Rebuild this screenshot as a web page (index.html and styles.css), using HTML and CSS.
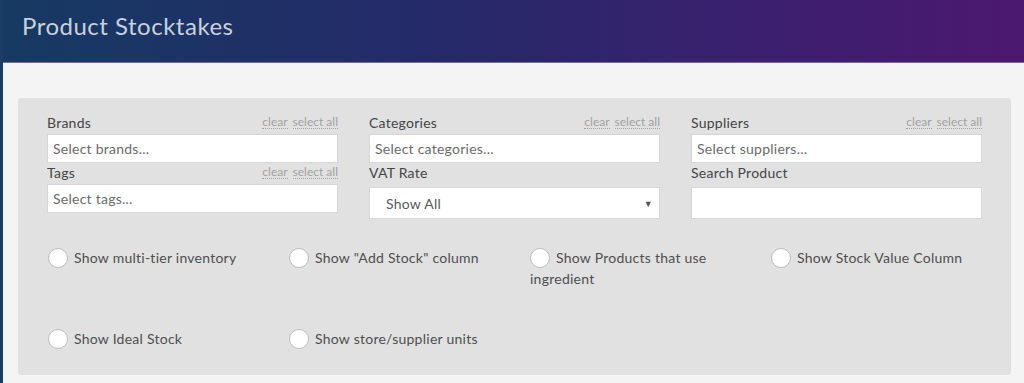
FILE: index.html
```html
<!DOCTYPE html>
<html lang="en">
<head>
    <meta charset="UTF-8">
    <meta name="viewport" content="width=device-width, initial-scale=1.0">
    <title>Product Stocktakes</title>
    <link rel="stylesheet" href="styles.css">
</head>
<body>
    <header class="page-header">
        <h1>Product Stocktakes</h1>
    </header>

    <main class="page-content">
        <div class="filter-panel">
            <div class="filter-grid">
                <div class="field">
                    <div class="field-head">
                        <label>Brands</label>
                        <span class="links"><a>clear</a><a>select all</a></span>
                    </div>
                    <div class="picker">Select brands...</div>
                </div>
                <div class="field">
                    <div class="field-head">
                        <label>Categories</label>
                        <span class="links"><a>clear</a><a>select all</a></span>
                    </div>
                    <div class="picker">Select categories...</div>
                </div>
                <div class="field">
                    <div class="field-head">
                        <label>Suppliers</label>
                        <span class="links"><a>clear</a><a>select all</a></span>
                    </div>
                    <div class="picker">Select suppliers...</div>
                </div>

                <div class="field">
                    <div class="field-head">
                        <label>Tags</label>
                        <span class="links"><a>clear</a><a>select all</a></span>
                    </div>
                    <div class="picker">Select tags...</div>
                </div>
                <div class="field">
                    <div class="field-head">
                        <label>VAT Rate</label>
                    </div>
                    <div class="select-box">
                        <span>Show All</span>
                        <span class="caret">&#9660;</span>
                    </div>
                </div>
                <div class="field">
                    <div class="field-head">
                        <label>Search Product</label>
                    </div>
                    <input type="text" class="text-input">
                </div>
            </div>

            <div class="option-grid">
                <div class="option"><span class="radio"></span>Show multi-tier inventory</div>
                <div class="option"><span class="radio"></span>Show "Add Stock" column</div>
                <div class="option"><span class="radio"></span>Show Products that use ingredient</div>
                <div class="option"><span class="radio"></span>Show Stock Value Column</div>
                <div class="option"><span class="radio"></span>Show Ideal Stock</div>
                <div class="option"><span class="radio"></span>Show store/supplier units</div>
            </div>
        </div>
    </main>
</body>
</html>
```

FILE: styles.css
```css
html, body {
    overflow: hidden;
}
body {
    margin: 0;
    font-family: 'Lato', 'Noto Sans', sans-serif;
    background: #f4f4f5;
    border-left: 3px solid #1b3d63;
    min-height: 100vh;
    box-sizing: border-box;
    letter-spacing: 0.25px;
}
.page-header {
    height: 63px;
    background: linear-gradient(90deg, #163a62 0%, #26296a 45%, #3c1f6e 75%, #4c196f 100%);
    border-bottom: 1px solid #7a6a96;
    box-sizing: border-box;
    margin-left: -3px;
    padding-left: 22px;
}
.page-header h1 {
    margin: 0;
    padding-top: 11px;
    font-size: 24px;
    font-weight: 400;
    color: #c9d1dd;
    letter-spacing: 0.5px;
}
.page-content {
    padding: 35px 13px 0 15px;
}
.filter-panel {
    background: #e1e1e1;
    border-radius: 3px;
    padding: 15px 30px 20px 29px;
    height: 277px;
    box-sizing: border-box;
}
.filter-grid {
    display: grid;
    grid-template-columns: repeat(3, 291px);
    column-gap: 31px;
}
.field-head {
    display: flex;
    justify-content: space-between;
    align-items: flex-end;
    height: 21px;
}
.field-head label {
    font-size: 14px;
    color: #454545;
    line-height: 18px;
    margin-bottom: 2px;
}
.links {
    font-size: 12px;
    color: #a2a2a2;
    line-height: 18px;
    margin-bottom: 3px;
    letter-spacing: 0;
}
.links a {
    border-bottom: 1px dotted #a2a2a2;
    line-height: 13px;
    display: inline-block;
}
.links a + a {
    margin-left: 5px;
}
.picker {
    height: 29px;
    background: #fff;
    border: 1px solid #d6d6d6;
    box-sizing: border-box;
    padding-left: 5px;
    font-size: 14px;
    line-height: 27px;
    color: #6a6a6a;
}
.select-box {
    height: 32px;
    margin-top: 3px;
    background: #fff;
    border: 1px solid #d6d6d6;
    box-sizing: border-box;
    padding: 0 6px 0 16px;
    display: flex;
    justify-content: space-between;
    align-items: center;
    font-size: 14px;
    color: #5a5a5a;
}
.caret {
    font-size: 9px;
    color: #555;
}
.text-input {
    display: block;
    width: 100%;
    height: 32px;
    margin: 3px 0 0;
    background: #fff;
    border: 1px solid #d6d6d6;
    box-sizing: border-box;
}
.option-grid {
    display: grid;
    grid-template-columns: repeat(4, 241px);
    grid-template-rows: 81px auto;
    margin-top: 28px;
    margin-left: 1px;
}
.option {
    font-size: 14px;
    color: #4f4f4f;
    line-height: 21px;
    padding-right: 20px;
}
.radio {
    display: inline-block;
    width: 18px;
    height: 18px;
    border: 1px solid #bdbdbd;
    border-radius: 50%;
    background: #fff;
    vertical-align: -5px;
    margin-right: 6px;
}
```
